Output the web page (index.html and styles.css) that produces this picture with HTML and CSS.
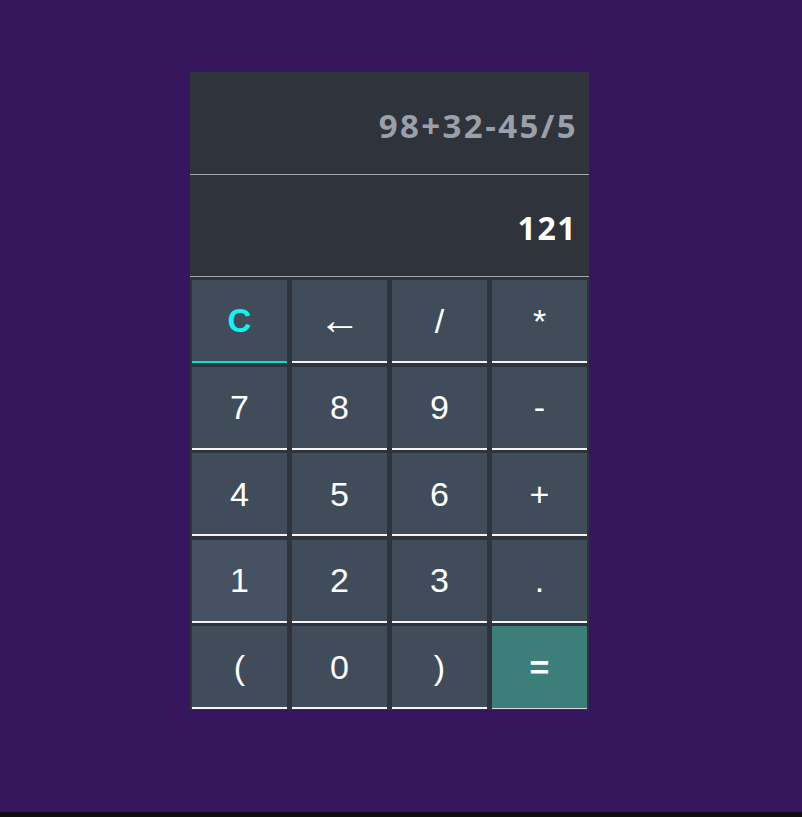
FILE: index.html
```html
<!DOCTYPE html>
<html lang="en">
<head>
<meta charset="utf-8">
<title>Calculator</title>
<link rel="stylesheet" href="styles.css">
</head>
<body>
<div class="calculator">
  <div class="display expression">98+32-45/5</div>
  <div class="display result">121</div>
  <div class="keys">
    <button class="key clear">C</button>
    <button class="key arrow">&larr;</button>
    <button class="key">/</button>
    <button class="key">*</button>
    <button class="key">7</button>
    <button class="key">8</button>
    <button class="key">9</button>
    <button class="key">-</button>
    <button class="key">4</button>
    <button class="key">5</button>
    <button class="key">6</button>
    <button class="key">+</button>
    <button class="key hover">1</button>
    <button class="key">2</button>
    <button class="key">3</button>
    <button class="key">.</button>
    <button class="key">(</button>
    <button class="key">0</button>
    <button class="key">)</button>
    <button class="key equals">=</button>
  </div>
</div>
</body>
</html>
```
FILE: styles.css
```css
html {
  background: #0f0f0f;
}
body {
  margin: 0;
  height: 812px;
  box-sizing: border-box;
  padding: 72px 0 0 190px;
  background: #36175e;
}
.calculator {
  width: 399px;
  padding-top: 1px;
  background: #2f333b;
  display: flex;
  flex-direction: column;
}
.display {
  border-bottom: 1px solid #a4a7ae;
  display: flex;
  align-items: center;
  justify-content: flex-end;
  padding: 3px 13px 0 0;
  box-sizing: border-box;
  height: 102px;
  font-family: "Open Sans", "DejaVu Sans", sans-serif;
  font-weight: 700;
  font-size: 33px;
}
.expression {
  color: #9aa0aa;
  letter-spacing: 2.4px;
  padding-right: 11px;
}
.result {
  color: #ffffff;
  font-size: 32px;
  letter-spacing: 1.5px;
  padding-right: 12px;
}
.keys {
  display: grid;
  grid-template-columns: repeat(4, 95px);
  grid-auto-rows: 83px;
  column-gap: 5px;
  row-gap: 3.5px;
  padding: 3px 2px 1px 2px;
}
.key {
  margin: 0;
  padding: 0;
  border: none;
  border-bottom: 2px solid #f4f4f4;
  background: #414c5b;
  color: #ffffff;
  font-family: "Liberation Sans", Arial, sans-serif;
  font-size: 34px;
  line-height: 1;
}
.key.arrow {
  font-size: 42px;
  padding-bottom: 2px;
}
.key.hover {
  background: #465264;
}
.key.clear {
  color: #14f1f1;
  font-weight: 700;
  font-size: 33px;
  border-bottom-color: #14d8d8;
}
.key.equals {
  background: #3c7e7a;
  font-weight: 700;
  border-bottom: 1px solid #d8d8d8;
}
```
